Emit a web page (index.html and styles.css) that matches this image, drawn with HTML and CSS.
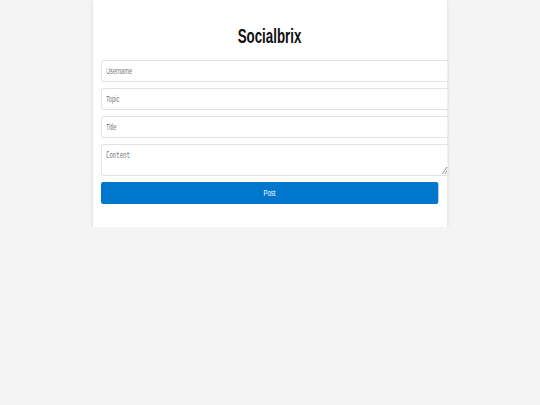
FILE: index.html
```html
<!DOCTYPE html>
<html>
<head>
<meta charset="utf-8">
<link rel="stylesheet" href="styles.css">
</head>
<body>
<div class="card">
  <form class="post-form">
    <h1 class="title">Socialbrix</h1>
    <input class="field" type="text" placeholder="Username">
    <input class="field" type="text" placeholder="Topic">
    <input class="field" type="text" placeholder="Title">
    <textarea class="field area" placeholder="Content"></textarea>
    <button class="post-btn" type="button">Post</button>
  </form>
</div>
</body>
</html>
```
FILE: styles.css
```css
html, body {
  margin: 0;
  padding: 0;
  background: #f4f4f4;
  font-family: "Liberation Sans", Arial, sans-serif;
}
.card {
  width: 354px;
  box-sizing: border-box;
  margin: 0 auto;
  padding: 25px 9px 23px 8px;
  background: #fff;
  box-shadow: 0 1px 4px rgba(0, 0, 0, 0.12);
}
.post-form {
  width: 505.5px;
  margin: 0;
  transform: scaleX(0.6667);
  transform-origin: 0 0;
}
.title {
  margin: 0 0 12px;
  font-size: 20px;
  line-height: 23px;
  font-weight: bold;
  text-align: center;
  color: #111;
}
.field {
  display: block;
  box-sizing: border-box;
  width: calc(100% + 15px);
  height: 22px;
  margin: 0 0 6px;
  padding: 0 6.5px;
  border: 1px solid #dcdcdc;
  border-radius: 3px;
  background: #fff;
  font-family: "Liberation Sans", Arial, sans-serif;
  font-size: 8.5px;
  color: #333;
  outline: none;
}
.field::placeholder {
  color: #777;
}
.area {
  height: 32px;
  padding: 5px 6.5px;
  font-family: "DejaVu Sans Mono", monospace;
  font-size: 8.5px;
  line-height: 10px;
}
.post-btn {
  display: block;
  box-sizing: border-box;
  width: 100%;
  height: 22px;
  margin: 0;
  padding: 0;
  border: none;
  border-radius: 3px;
  background: #0077cc;
  color: #fff;
  font-family: "Liberation Sans", Arial, sans-serif;
  font-size: 9px;
}
```
